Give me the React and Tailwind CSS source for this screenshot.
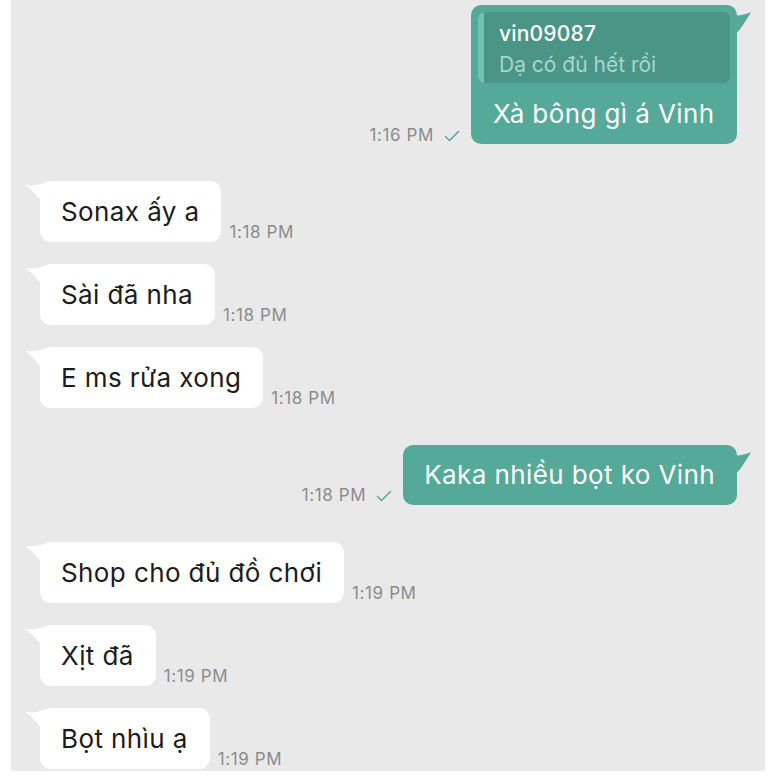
import React from "react";

const font = { fontFamily: 'Inter, "Liberation Sans", Arial, sans-serif' };

function LeftTail() {
  return (
    <svg className="absolute left-[-15px] top-[2px]" width="20" height="24" viewBox="0 0 20 24">
      <path d="M0 2 C6 3 12 2 20 0 L20 24 C15 16 9 8 0 2 Z" fill="#ffffff" />
    </svg>
  );
}

function RightTail() {
  return (
    <svg className="absolute right-[-14px] top-[6px]" width="20" height="26" viewBox="0 0 20 26">
      <path d="M20 1 C14 4 7 5 0 4 L0 26 C4 24 8 20 12 14 C15 9 18 5 20 1 Z" fill="#55a999" />
    </svg>
  );
}

function Check() {
  return (
    <svg width="16" height="12" viewBox="0 0 16 12">
      <path d="M1.5 6.5 L5.5 10.5 L14.5 1.5" stroke="#5aa898" strokeWidth="1.6" fill="none" strokeLinecap="round" strokeLinejoin="round" />
    </svg>
  );
}

function Time({ t }) {
  return <span className="text-[17px] text-[#8c8c8c] leading-none tracking-[0.6px]">{t}</span>;
}

function LeftMsg({ text, time, mt }) {
  return (
    <div className={`flex items-end ${mt}`}>
      <div className="relative h-[61px] bg-white rounded-[11px] pl-[21px] pr-[22px] flex items-center">
        <LeftTail />
        <span className="text-[26px] text-[#1c1c1c] leading-none tracking-[0.4px]">{text}</span>
      </div>
      <div className="ml-[8px] mb-[1px] leading-none">
        <Time t={time} />
      </div>
    </div>
  );
}

export default function App() {
  return (
    <div className="w-[777px] h-[777px] bg-white overflow-hidden" style={font}>
      <div className="ml-[11px] w-[754px] h-[771px] bg-[#e9e9e9] pl-[29px] pr-[28px] pt-[5px]">
        <div className="flex justify-end items-end">
          <div className="flex items-center gap-[10px] mr-[11px] mb-0 leading-none">
            <Time t="1:16 PM" />
            <Check />
          </div>
          <div className="relative w-[266px] h-[139px] bg-[#55a999] rounded-[10px] p-[7px]">
            <RightTail />
            <div className="flex h-[71px] bg-[#4b9586] rounded-[7px] overflow-hidden">
              <div className="w-[6px] bg-[#6cc6b4]" />
              <div className="pl-[15px] pt-[11px] flex flex-col">
                <span className="text-[21px] font-medium text-white leading-none tracking-[0.2px]">vin09087</span>
                <span className="text-[21px] text-[#a8d7cd] leading-none mt-[10px]">Dạ có đủ hết rồi</span>
              </div>
            </div>
            <div className="pl-[15px] mt-[18px] text-[26px] text-white leading-none tracking-[0.4px]">Xà bông gì á Vinh</div>
          </div>
        </div>

        <LeftMsg text="Sonax ấy a" time="1:18 PM" mt="mt-[37px]" />
        <LeftMsg text="Sài đã nha" time="1:18 PM" mt="mt-[22px]" />
        <LeftMsg text="E ms rửa xong" time="1:18 PM" mt="mt-[22px]" />

        <div className="flex justify-end items-end mt-[37px]">
          <div className="flex items-center gap-[10px] mr-[11px] mb-[1px] leading-none">
            <Time t="1:18 PM" />
            <Check />
          </div>
          <div className="relative h-[60px] bg-[#55a999] rounded-[10px] pl-[21px] pr-[22px] flex items-center">
            <RightTail />
            <span className="text-[26px] text-white leading-none tracking-[0.4px]">Kaka nhiều bọt ko Vinh</span>
          </div>
        </div>

        <LeftMsg text="Shop cho đủ đồ chơi" time="1:19 PM" mt="mt-[37px]" />
        <LeftMsg text="Xịt đã" time="1:19 PM" mt="mt-[22px]" />
        <LeftMsg text="Bọt nhìu ạ" time="1:19 PM" mt="mt-[22px]" />
      </div>
    </div>
  );
}
